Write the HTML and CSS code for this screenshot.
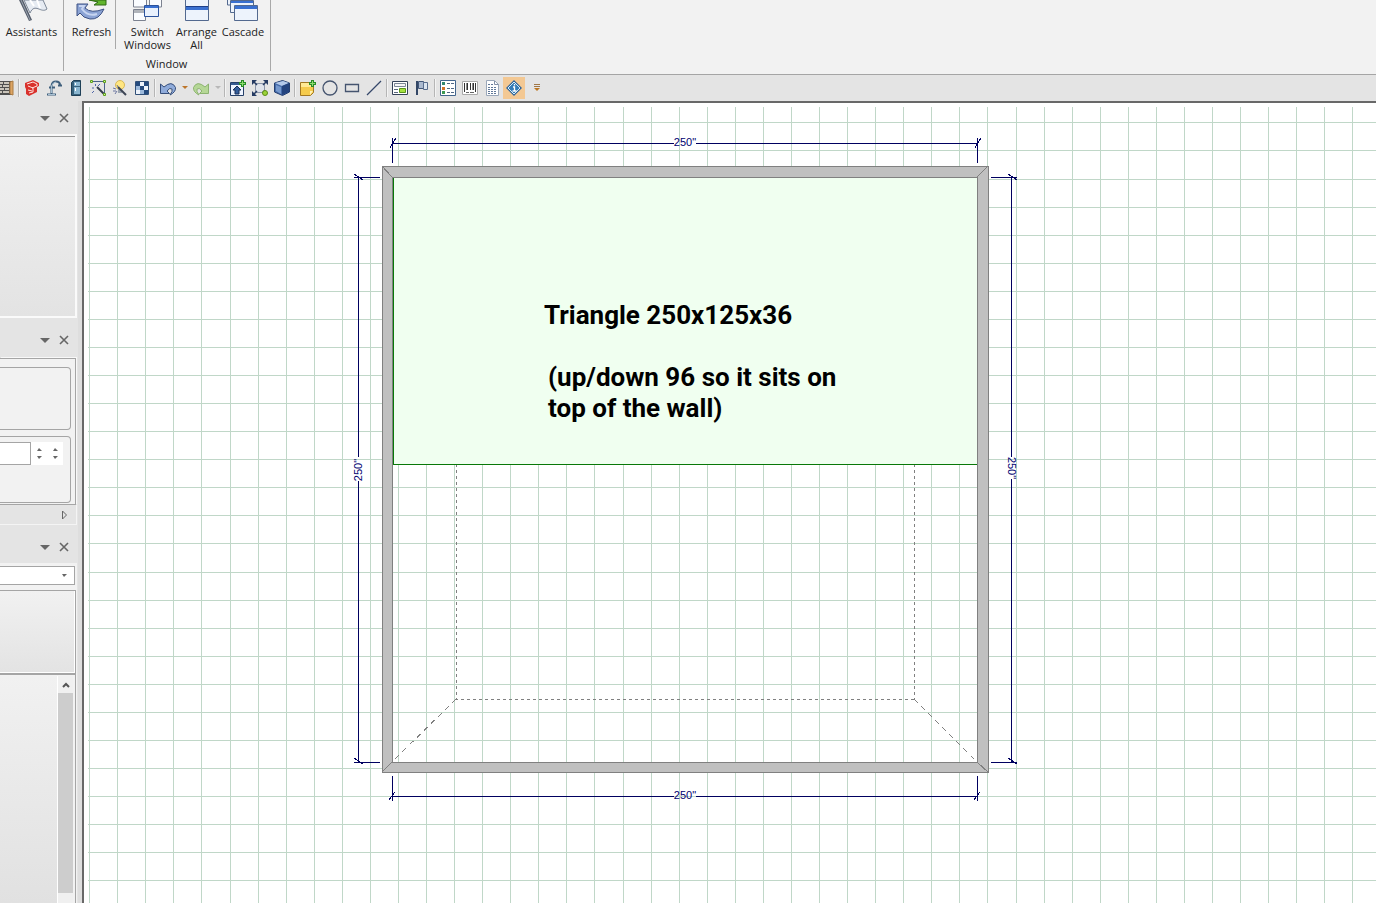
FILE: index.html
```html
<!DOCTYPE html>
<html lang="en">
<head>
<meta charset="utf-8">
<title>Floor plan</title>
<link rel="stylesheet" href="styles.css">
</head>
<body>
<div class="app">
  <header class="ribbon">
    <section class="ribbon-group">
      <div class="ribbon-items">
        <button class="ribbon-button assistants" type="button">
          <svg class="ribbon-icon" viewBox="0 0 32 21"><path d="M8 0L14 13C19 2 25 14 31 9L27 0Z" fill="#e6ebf2" stroke="#7b8696"/><path d="M14 0l4 6M21 0l3 8" stroke="#fff" stroke-width="2"/><path d="M3 0L13 21L16 20L7 0Z" fill="#555d6b"/><path d="M5 0L14 20" stroke="#9aa3b0"/></svg>
          <span>Assistants</span>
        </button>
      </div>
    </section>
    <section class="ribbon-group">
      <div class="ribbon-items">
        <button class="ribbon-button refresh" type="button">
          <svg class="ribbon-icon" viewBox="0 0 32 21"><path d="M13 0h17v5H18l4-3z" fill="#62b52d" stroke="#2f6915"/><path d="M1 4H12L9 8Q15 14 28 9Q23 20 14 19Q7 18 4 13L1 16Z" fill="#8ba3d4" stroke="#3f5384"/><path d="M3 6h5L6 9Q12 17 21 14" fill="none" stroke="#c7d5f1" stroke-width="2"/></svg>
          <span>Refresh</span>
        </button>
        <span class="ribbon-rule"></span>
        <button class="ribbon-button switch" type="button">
          <svg class="ribbon-icon" viewBox="0 0 32 21"><g fill="#fafcff" stroke="#7c8290"><path d="M1.500 -2h13v9h-13zM17.500 -2h12v9h-12zM1.500 9.500h12v11h-12z"/></g><path d="M2 10h11v3H2z" fill="#b0b4bb"/><path d="M12.500 5.500h14v11h-14z" fill="#e9f1fd" stroke="#2b529c"/><path d="M13 6h13v2H13z" fill="#3970d1"/></svg>
          <span>Switch<br>Windows</span>
        </button>
        <button class="ribbon-button arrange" type="button">
          <svg class="ribbon-icon" viewBox="0 0 32 21"><path d="M4.500 -2h23v22.500h-23z" fill="#edf3fc" stroke="#53698f"/><path d="M5 6h22v4H5z" fill="#3970d1"/><path d="M5 6.500h22" stroke="#1d3f8a"/></svg>
          <span>Arrange<br>All</span>
        </button>
        <button class="ribbon-button cascade" type="button">
          <svg class="ribbon-icon" viewBox="0 0 32 21"><g fill="#edf3fc" stroke="#53698f"><path d="M.500 -3h22v8h-22z"/><path d="M3.500 .500h23v12h-23z"/><path d="M7.500 5.500h23v15h-23z"/></g><path d="M4 1h22v2H4zM8 6h22v3H8z" fill="#3970d1"/></svg>
          <span>Cascade</span>
        </button>
      </div>
      <h2 class="ribbon-title">Window</h2>
    </section>
  </header>

  <nav class="toolbar" aria-label="Tools">
    <button class="tool first" type="button" aria-label="Wall materials"><svg viewBox="0 0 16 16"><path d="M1 1h12v14H1z" fill="#4f4f4f"/><path d="M2 3h3M6 3h5M2 6h2M5 6h6M2 9h4M7 9h4M2 12h2M5 12h6" stroke="#c9c4ba" stroke-width="2"/><path d="M12 2l3-1v14l-3-1z" fill="#dda564" stroke="#a97a43"/></svg></button>
    <span class="rule"></span>
    <button class="tool" type="button" aria-label="3D warehouse"><svg viewBox="0 0 16 16"><path d="M1 3L9 0l6 3v3l-2 1v5l-8 4-3-2V9L1 7z" fill="#d9312c"/><path d="M3 4l6-2 4 2v2l-5 2M4 6l5 2v4l-4 1M4 10l4 1" fill="none" stroke="#ffe4df" stroke-width="1"/></svg></button>
    <button class="tool" type="button" aria-label="Fixtures"><svg viewBox="0 0 16 16"><path d="M1 14.500h9M5.500 14V6Q6 1.500 10 1.500Q14 1.500 14 5M3 7.500h6M12 5.500h4" fill="none" stroke="#3f5f7c" stroke-width="2"/><path d="M2 14.500h7M5.500 13V6Q7 2 10 2" fill="none" stroke="#c3dbea" stroke-width=".8"/></svg></button>
    <button class="tool" type="button" aria-label="Appliances"><svg viewBox="0 0 16 16"><path d="M3.500 2.500l2-2h7v15h-9z" fill="#38627d" stroke="#1f4057"/><path d="M6 2h6v4H6zM6 7h6v7H6z" fill="#8ab6d0"/><path d="M7.500 3v2M7.500 8v3" stroke="#fff"/></svg></button>
    <button class="tool" type="button" aria-label="Edit points"><svg viewBox="0 0 16 16"><path d="M2 1.500h12.500v13" fill="none" stroke="#4c6388"/><path d="M7 7l7 7" stroke="#333b4b" stroke-width="2"/><path d="M5.500 4v2M2 8h2M8 6l2-2M4 11l-2 2" stroke="#4f65a8"/><g fill="#d2f59a" stroke="#5d9f1b"><path d="M.500 .500h2v2h-2zM13.500 .500h2v2h-2zM13.500 13.500h2v2h-2z"/></g></svg></button>
    <button class="tool" type="button" aria-label="Lighting wizard"><svg viewBox="0 0 16 16"><circle cx="8" cy="5" r="4.500" fill="#ffe681" stroke="#d8b858"/><path d="M6 9h4v4H6z" fill="#9aa3af"/><path d="M6 7l8 8" stroke="#3c4454" stroke-width="2"/><path d="M1 8l3 1M3 14l2-3M1 11h3M5 5l1 2" stroke="#6b75a0"/></svg></button>
    <button class="tool" type="button" aria-label="Pattern"><svg viewBox="0 0 16 16"><path d="M1.500 1.500h13v13h-13z" fill="#edf3fb" stroke="#315078"/><path d="M2 2h4v4H2zM10 2h4v4h-4zM6 6h4v4H6zM10 10h4v4h-4z" fill="#244a7d"/><path d="M2 6h4v4H2zM6 10h4v4H6z" fill="#9cb9db"/></svg></button>
    <span class="rule"></span>
    <button class="tool" type="button" aria-label="Undo"><svg viewBox="0 0 16 16"><path d="M.500 4v9.500h9L7 11Q10 7 12 9Q13 11 10 15Q16 12 15.500 7.500Q12 0 4 7z" fill="#8fabda" stroke="#364e79"/></svg></button>
    <button class="drop" type="button" aria-label="Undo history"><svg viewBox="0 0 6 4"><path d="M0 0h6L3 3z" fill="#bd762b"/></svg></button>
    <button class="tool" type="button" aria-label="Redo"><svg viewBox="0 0 16 16"><path d="M15.500 4v9.500h-9L9 11Q6 7 4 9Q3 11 6 15Q0 12 .500 7.500Q4 0 12 7z" fill="#b5d796" stroke="#8db371"/></svg></button>
    <button class="drop" type="button" aria-label="Redo history"><svg viewBox="0 0 6 4"><path d="M0 0h6L3 3z" fill="#b8b8b8"/></svg></button>
    <span class="rule"></span>
    <button class="tool" type="button" aria-label="Add floor"><svg viewBox="0 0 16 16"><path d="M.500 2.500h13v13H.500z" fill="#eef4ff" stroke="#253f68"/><path d="M1 3h12v2H1z" fill="#365b91"/><path d="M7 6l4 4H9v4H5v-4H3z" fill="#345e9c" stroke="#182f58"/><path d="M12.500 0v7M9 3.500h7" stroke="#278c27" stroke-width="3"/><path d="M12.500 1v5M10 3.500h5" stroke="#8edb70"/></svg></button>
    <button class="tool" type="button" aria-label="Fit to window"><svg viewBox="0 0 16 16"><path d="M3.500 3.500h9v9h-9z" fill="#dfe3eb" stroke="#8b95a8"/><path d="M0 0h5L0 5zM16 0h-5l5 5zM0 16h5l-5-5z" fill="#263b63"/><path d="M1 1l4 4M15 1l-4 4M1 15l4-4M11 11l2 2" stroke="#263b63" stroke-width="1.500"/><circle cx="13" cy="13" r="2.500" fill="#9bd338" stroke="#5b8b16"/></svg></button>
    <button class="tool" type="button" aria-label="3D view"><svg viewBox="0 0 16 16"><path d="M.500 3l8-2.500 7 2.500v9l-7 3.500-8-3.500z" fill="#456ba9" stroke="#253f70"/><path d="M1 3l8-2 6 2-7 3z" fill="#b3c9ea"/><path d="M8 6l7-3v9l-7 3z" fill="#24447f"/><path d="M2 5v6l5 3V7z" fill="#7598cd"/></svg></button>
    <span class="rule"></span>
    <button class="tool" type="button" aria-label="Add note"><svg viewBox="0 0 16 16"><path d="M.500 2.500h13v10l-3 3H.500z" fill="#f5cb4d" stroke="#a27823"/><path d="M1 3h12v4H1z" fill="#ffe995"/><path d="M10 15v-4h3z" fill="#fff1b7"/><path d="M12.500 0v7M9 3.500h7" stroke="#278c27" stroke-width="3"/><path d="M12.500 1v5M10 3.500h5" stroke="#8edb70"/></svg></button>
    <button class="tool" type="button" aria-label="Circle"><svg viewBox="0 0 16 16"><circle cx="8" cy="8" r="7" fill="none" stroke="#45546f" stroke-width="1.300"/></svg></button>
    <button class="tool" type="button" aria-label="Rectangle"><svg viewBox="0 0 16 16"><path d="M1.500 4.500h13v7h-13z" fill="none" stroke="#45546f" stroke-width="1.300"/></svg></button>
    <button class="tool" type="button" aria-label="Line"><svg viewBox="0 0 16 16"><path d="M1 15L15 1" stroke="#35476a" stroke-width="1.300"/></svg></button>
    <span class="rule"></span>
    <button class="tool" type="button" aria-label="Page layout"><svg viewBox="0 0 16 16"><path d="M.500 1.500h15v13H.500z" fill="#fff" stroke="#354258"/><path d="M2.500 3.500h11v3h-11z" fill="#f6f6f6" stroke="#7c8796"/><path d="M2 9.500h4M2 12.500h4" stroke="#59687d"/><path d="M7.500 8.500h6v4h-6z" fill="#a5e23f" stroke="#5a951b"/></svg></button>
    <button class="tool" type="button" aria-label="Flag"><svg viewBox="0 0 16 16"><path d="M3 1v14" stroke="#334766" stroke-width="2"/><path d="M4.500 1.500h5v7h-5z" fill="#aab9cf" stroke="#425779"/><path d="M9.500 2.500h4v7h-4z" fill="#dbe4ef" stroke="#586d8d"/></svg></button>
    <span class="rule"></span>
    <button class="tool" type="button" aria-label="Item list"><svg viewBox="0 0 16 16"><path d="M.500 .500h15v15H.500z" fill="#fff" stroke="#43658d"/><path d="M7 3.500h7M7 8.500h7M7 12.500h7" stroke="#4f6785" stroke-dasharray="3 1"/><path d="M2 2h3v3H2z" fill="#31876f"/><path d="M2 7h3v3H2z" fill="#d37329"/><path d="M2 11h3v3H2z" fill="#3c9953"/></svg></button>
    <button class="tool" type="button" aria-label="Barcode"><svg viewBox="0 0 16 16"><path d="M.500 1.500h15v13H.500z" fill="#fff" stroke="#aaa"/><path d="M2.500 3v9M5.500 3v7M8.500 3v7M11.500 3v7M13.500 3v9" stroke="#333"/><path d="M4.500 3v7M10.500 3v7" stroke="#888"/><path d="M4 12.500h3M8 12.500h4" stroke="#666"/></svg></button>
    <button class="tool" type="button" aria-label="Report"><svg viewBox="0 0 16 16"><path d="M2.500 .500h8l4 4v11h-12z" fill="#fff" stroke="#9aa7b9"/><path d="M4 4.500h5M4 7.500h9M4 9.500h9M4 11.500h9M4 13.500h9" stroke="#617898" stroke-dasharray="2 1"/><path d="M10.500 1v3.500h4" fill="none" stroke="#8290a6"/></svg></button>
    <button class="tool active" type="button" aria-label="Information" aria-pressed="true"><svg viewBox="0 0 16 16"><path d="M8 0l8 8-8 8-8-8z" fill="#31659a"/><path d="M8 2l6 6-6 6-6-6z" fill="#347db8" stroke="#d6ebf6"/><path d="M7 7h1.500v4M6.500 11h4M8.500 4v1.500" fill="none" stroke="#fff" stroke-width="1.300"/></svg></button>
    <button class="tool" type="button" aria-label="More tools"><svg viewBox="0 0 16 16"><path d="M6 4.500h6M6 6.500h6" stroke="#a07747"/><path d="M6 8h6l-3 3z" fill="#bd7620"/></svg></button>
  </nav>

  <main class="main">
    <aside class="sidebar">
      <section class="panel">
        <div class="panel-head">
          <button type="button" aria-label="Panel menu"><svg viewBox="0 0 10 10"><path d="M0 3h10L5 8z" fill="#666"/></svg></button>
          <button type="button" aria-label="Close panel"><svg viewBox="0 0 10 10"><path d="M1 1l8 8M9 1L1 9" stroke="#666" stroke-width="1.600"/></svg></button>
        </div>
        <div class="preview"></div>
      </section>
      <section class="panel">
        <div class="panel-head second">
          <button type="button" aria-label="Panel menu"><svg viewBox="0 0 10 10"><path d="M0 3h10L5 8z" fill="#666"/></svg></button>
          <button type="button" aria-label="Close panel"><svg viewBox="0 0 10 10"><path d="M1 1l8 8M9 1L1 9" stroke="#666" stroke-width="1.600"/></svg></button>
        </div>
        <div class="properties">
          <div class="field-box"></div>
          <div class="field-box fields">
            <input class="value" type="text" aria-label="Value">
            <span class="spin"><button type="button" aria-label="Increase"><svg viewBox="0 0 5 3"><path d="M0 3h5L2 0z" fill="#666"/></svg></button><button type="button" aria-label="Decrease"><svg viewBox="0 0 5 3"><path d="M0 0h5L2 3z" fill="#666"/></svg></button></span>
            <span class="spin"><button type="button" aria-label="Increase step"><svg viewBox="0 0 5 3"><path d="M0 3h5L2 0z" fill="#666"/></svg></button><button type="button" aria-label="Decrease step"><svg viewBox="0 0 5 3"><path d="M0 0h5L2 3z" fill="#666"/></svg></button></span>
          </div>
        </div>
        <div class="panel-foot">
          <button type="button" aria-label="Next page"><svg viewBox="0 0 10 10"><path d="M3.500 1v8l4-4z" fill="none" stroke="#666"/></svg></button>
        </div>
      </section>
      <section class="panel library">
        <div class="panel-head third">
          <button type="button" aria-label="Panel menu"><svg viewBox="0 0 10 10"><path d="M0 3h10L5 8z" fill="#666"/></svg></button>
          <button type="button" aria-label="Close panel"><svg viewBox="0 0 10 10"><path d="M1 1l8 8M9 1L1 9" stroke="#666" stroke-width="1.600"/></svg></button>
        </div>
        <div class="library-body">
          <div class="select-wrap">
            <select class="catalog" aria-label="Catalog"><option></option></select>
            <svg class="select-arrow" viewBox="0 0 5 3"><path d="M0 0h5L2 3z" fill="#666"/></svg>
          </div>
          <div class="thumb-box"></div>
          <div class="list">
            <div class="list-body"></div>
            <div class="scrollbar">
              <button type="button" aria-label="Scroll up"><svg viewBox="0 0 10 10"><path d="M2 7l3-3 3 3" fill="none" stroke="#555" stroke-width="2"/></svg></button>
              <div class="scroll-thumb"></div>
            </div>
          </div>
        </div>
      </section>
    </aside>

    <section class="workspace" aria-label="Drawing">
      <svg class="drawing">
        <path class="grid" id="grid"/>
        <g transform="translate(298 63)">
          <path class="wall" fill-rule="evenodd" d="M0 0H606V606H0ZM10 11V596H595V11Z"/>
          <path class="wall-edge" d="M0 0L10 11M606 0L595 11M0 606L10 596M606 606L595 596"/>
          <path class="counter" d="M74 298V533H532M532 298V533"/>
          <path class="counter diagonal" d="M74 533L10 596M532 533L595 596"/>
          <rect class="roof" x="11" y="12" width="584" height="286"/>
          <path class="roof-edge" d="M11 12V298H595"/>
          <path class="dim" d="M10 -23H292M314 -23H595M10 -28V-3M595 -28V-3M10 630H292M314 630H595M10 610V635M595 610V635M-24 11V291M-24 315V596M-28 11H-2M-28 596H-2M629 11V291M629 313V596M609 11H635M609 596H635"/>
          <path class="dim" d="M8 -18L14 -28M593 -18L599 -28M7 634L13 626M592 634L598 626M-28 8L-19 14M-28 592L-19 598M626 8L635 14M626 592L635 598"/>
          <text class="dim-text" x="303" y="-20">250"</text>
          <text class="dim-text" x="303" y="633">250"</text>
          <text class="dim-text" transform="translate(-20 304) rotate(-90)">250"</text>
          <text class="dim-text" transform="translate(626 302) rotate(90)">250"</text>
          <text class="note" x="162" y="158">Triangle 250x125x36</text>
          <text class="note" x="166" y="220">(up/down 96 so it sits on</text>
          <text class="note" x="166" y="251">top of the wall)</text>
        </g>
      </svg>
    </section>
  </main>
</div>
<script src="grid.js"></script>
</body>
</html>
```
FILE: grid.js
```js
// Draws the snap grid over the whole drawing area, one line per 12 inches.
const STEP = 28.07;
const ORIGIN = { x: 5.2, y: 19.4 };
const grid = document.getElementById("grid");

function drawGrid() {
  const { width, height } = grid.ownerSVGElement.getBoundingClientRect();
  let d = "";
  for (let i = 0; i * STEP < width; i++) {
    d += `M${Math.round(ORIGIN.x + i * STEP)} 4V${height}`;
  }
  for (let i = 0; i * STEP < height; i++) {
    d += `M4 ${Math.round(ORIGIN.y + i * STEP)}H${width}`;
  }
  grid.setAttribute("d", d);
}

window.addEventListener("resize", drawGrid);
drawGrid();
```
FILE: styles.css
```css
* { box-sizing: border-box; }

body {
  margin: 0;
  font: 11px/13px "Open Sans", "Noto Sans", sans-serif;
  color: #222;
}

button {
  border: 0;
  padding: 0;
  background: none;
  font: inherit;
  color: inherit;
}

svg { display: block; }

.app {
  display: flex;
  flex-direction: column;
  height: 100vh;
  overflow: hidden;
  background: #e4e4e4;
}

/* Ribbon */
.ribbon {
  display: flex;
  flex: none;
  padding-bottom: 3px;
  background: #f2f2f2;
  border-bottom: 1px solid #a5a5a5;
}

.ribbon-group {
  display: flex;
  flex-direction: column;
  justify-content: space-between;
  border-right: 1px solid #a9a9a9;
}

.ribbon-group + .ribbon-group { padding: 0 5px 0 4px; }
.ribbon-items { display: flex; }

.ribbon-button {
  display: flex;
  flex-direction: column;
  align-items: center;
  gap: 4px;
  white-space: nowrap;
}

.ribbon-icon { width: 32px; height: 21px; }
.assistants { width: 63px; }
.refresh { width: 47px; }
.switch { width: 49px; }
.arrange { width: 49px; }
.cascade { width: 44px; }

.ribbon-rule {
  height: 49px;
  margin-right: 7px;
  border-right: 1px solid #a9a9a9;
}

.ribbon-title {
  margin: 6px 0 1px;
  font: inherit;
  text-align: center;
}

/* Quick tools */
.toolbar {
  display: flex;
  flex: none;
  align-items: center;
  height: 26px;
}

.tool {
  display: grid;
  place-items: center;
  width: 22px;
  height: 22px;
}

.tool.first { margin-left: -5px; }
.tool.active { background: #f3c893; }
.tool svg { width: 16px; height: 16px; }

.drop {
  display: grid;
  place-items: center;
  width: 11px;
  height: 22px;
}

.drop svg { width: 6px; height: 4px; }

.rule {
  width: 4px;
  height: 18px;
  background: linear-gradient(90deg, transparent 1px, #b5b5b5 1px 2px, #f4f4f4 2px 3px, transparent 3px);
}

/* Side panels */
.main {
  display: flex;
  flex: 1;
  min-height: 0;
}

.sidebar {
  display: flex;
  flex-direction: column;
  width: 82px;
  padding-right: 5px;
  background: linear-gradient(90deg, #e4e4e4 78px, #dedede 78px);
}

.panel-head {
  display: flex;
  justify-content: flex-end;
  align-items: center;
  gap: 9px;
  height: 33px;
  padding-right: 8px;
}

.panel-head.second { height: 40px; padding-top: 4px; }
.panel-head.third { height: 38px; padding-top: 5px; }
.panel-head svg { width: 10px; height: 10px; }

.preview {
  height: 184px;
  border: 2px solid #fafafa;
  border-left: 0;
  background: linear-gradient(#999 1px, #f1f1f1 1px, #e3e3e3);
}

.properties {
  display: flex;
  flex-direction: column;
  gap: 6px;
  margin-right: 1px;
  padding: 8px 4px 1px 0;
  background: #f2f2f2;
  border: 1px solid #a5a5a5;
  border-left: 0;
  box-shadow: 1px -1px #f8f8f8;
}

.field-box {
  height: 63px;
  border: 1px solid #a5a5a5;
  border-left: 0;
  border-radius: 0 4px 4px 0;
}

.field-box.fields {
  display: flex;
  height: 67px;
  padding-top: 5px;
}

.value {
  width: 31px;
  height: 23px;
  border: 1px solid #a5a5a5;
  border-left: 0;
  background: #fff;
}

.spin {
  display: flex;
  flex-direction: column;
  justify-content: space-evenly;
  align-items: center;
  width: 16px;
  height: 23px;
  background: #fff;
}

.spin svg { width: 5px; height: 3px; }

.panel-foot {
  display: flex;
  justify-content: flex-end;
  align-items: center;
  height: 20px;
  padding-right: 7px;
  border: solid #f4f4f4;
  border-width: 0 1px 1px 0;
}

.panel-foot svg { width: 10px; height: 10px; }

.library {
  display: flex;
  flex-direction: column;
  flex: 1;
  min-height: 0;
}

.library-body {
  display: flex;
  flex-direction: column;
  flex: 1;
  min-height: 0;
  padding: 3px 1px 0 0;
  background: #f2f2f2;
}

.select-wrap { position: relative; margin: 0 1px 5px 0; }

.catalog {
  display: block;
  width: 100%;
  height: 19px;
  appearance: none;
  border: 1px solid #a5a5a5;
  border-left: 0;
  border-radius: 0;
  background: #fff;
}

.select-arrow {
  position: absolute;
  top: 8px;
  right: 8px;
  width: 5px;
  height: 3px;
  pointer-events: none;
}

.thumb-box {
  flex: none;
  height: 85px;
  border: 1px solid #a5a5a5;
  border-width: 1px 1px 2px 0;
  background: linear-gradient(#f1f1f1, #e3e3e3);
  box-shadow: inset -1px -1px #fff;
}

.list {
  display: flex;
  flex: 1;
  padding: 1px 2px 0 0;
  border-right: 1px solid #a5a5a5;
}

.list-body {
  flex: 1;
  background: linear-gradient(#f1f1f1, #e1e1e1);
  border-right: 1px solid #fff;
}

.scrollbar { width: 15px; background: #f0f0f0; }
.scrollbar button { display: grid; place-items: center; width: 15px; height: 17px; }
.scrollbar svg { width: 10px; height: 10px; }
.scroll-thumb { height: 95%; max-height: 200px; background: #cdcdcd; }

/* Drawing area */
.workspace {
  flex: 1;
  min-width: 0;
  border: 2px solid #686868;
  border-width: 2px 0 0 2px;
  background: #fff;
}

.drawing {
  width: 100%;
  height: 100%;
  overflow: hidden;
  shape-rendering: crispEdges;
}

.grid { fill: none; stroke: #c0d7c8; }
.wall { fill: #c0c0c0; stroke: #808080; }
.wall-edge { stroke: #808080; }
.counter { fill: none; stroke: #808080; stroke-dasharray: 3 3; }
.counter.diagonal { stroke-dasharray: 5 5; }
.roof { fill: #f0fff0; }
.roof-edge { fill: none; stroke: #087808; }
.dim { fill: none; stroke: #000060; }

.dim-text {
  font: 11px "Liberation Sans", Arial, sans-serif;
  fill: #000070;
  text-anchor: middle;
}

.note {
  font: bold 26px Roboto, sans-serif;
  fill: #000;
}
```
